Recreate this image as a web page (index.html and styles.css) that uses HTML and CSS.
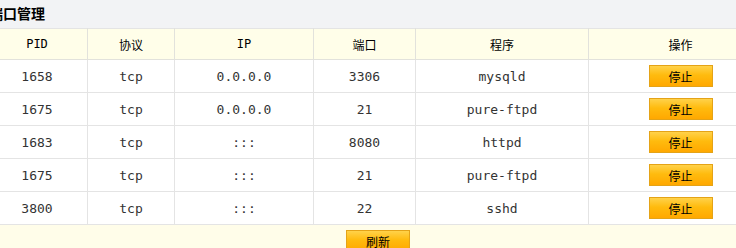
FILE: index.html
```html
<!DOCTYPE html>
<html>
<head>
<meta charset="utf-8">
<link rel="stylesheet" href="styles.css">
</head>
<body>
<div class="page">
  <div class="titlebar">端口管理</div>
  <table class="grid">
    <colgroup>
      <col class="c1"><col class="c2"><col class="c3"><col class="c4"><col class="c5"><col class="c6">
    </colgroup>
    <thead>
      <tr><th>PID</th><th>协议</th><th>IP</th><th>端口</th><th>程序</th><th>操作</th></tr>
    </thead>
    <tbody>
      <tr><td>1658</td><td>tcp</td><td>0.0.0.0</td><td>3306</td><td>mysqld</td><td><button class="btn">停止</button></td></tr>
      <tr><td>1675</td><td>tcp</td><td>0.0.0.0</td><td>21</td><td>pure-ftpd</td><td><button class="btn">停止</button></td></tr>
      <tr><td>1683</td><td>tcp</td><td>:::</td><td>8080</td><td>httpd</td><td><button class="btn">停止</button></td></tr>
      <tr><td>1675</td><td>tcp</td><td>:::</td><td>21</td><td>pure-ftpd</td><td><button class="btn">停止</button></td></tr>
      <tr><td>3800</td><td>tcp</td><td>:::</td><td>22</td><td>sshd</td><td><button class="btn">停止</button></td></tr>
    </tbody>
  </table>
  <div class="footer"><button class="btn">刷新</button></div>
</div>
</body>
</html>
```
FILE: styles.css
```css
html, body {
  margin: 0;
  padding: 0;
  background: #fff;
  overflow: hidden;
}
.page {
  width: 786px;
  margin-left: -14px;
  font-family: "DejaVu Sans Mono", monospace;
  color: #333;
}
.titlebar {
  height: 28px;
  box-sizing: border-box;
  background: #f2f3f5;
  padding-left: 3px;
  font-family: "Noto Sans CJK SC", sans-serif;
  font-weight: bold;
  font-size: 14px;
  line-height: 26px;
  color: #000;
}
.grid {
  width: 786px;
  border-collapse: collapse;
  table-layout: fixed;
}
.c1 { width: 101px; }
.c2 { width: 87px; }
.c3 { width: 139px; }
.c4 { width: 102px; }
.c5 { width: 173px; }
.c6 { width: 184px; }
.grid th {
  background: #fffee9;
  height: 30px;
  padding: 0;
  border: 1px solid #e2e2dc;
  border-top: 1px solid #e4e4e4;
  font-weight: normal;
  font-size: 12px;
  color: #000;
  font-family: "DejaVu Sans Mono", "Noto Sans CJK SC", monospace;
  text-align: center;
}
.grid td {
  height: 32px;
  padding: 0;
  border: 1px solid #e4e4e4;
  text-align: center;
  font-size: 13px;
}
.btn {
  width: 64px;
  height: 22px;
  padding: 0;
  border: 1px solid #e4a317;
  background: linear-gradient(to bottom, #ffd24a 0%, #ffbb0e 45%, #ffa800 100%);
  font-family: "Noto Sans CJK SC", sans-serif;
  font-size: 12px;
  color: #000;
  display: inline-block;
  vertical-align: middle;
}
.footer {
  background: #fffde9;
  height: 30px;
  padding-top: 5px;
  padding-right: 2px;
  box-sizing: border-box;
  text-align: center;
}
```
